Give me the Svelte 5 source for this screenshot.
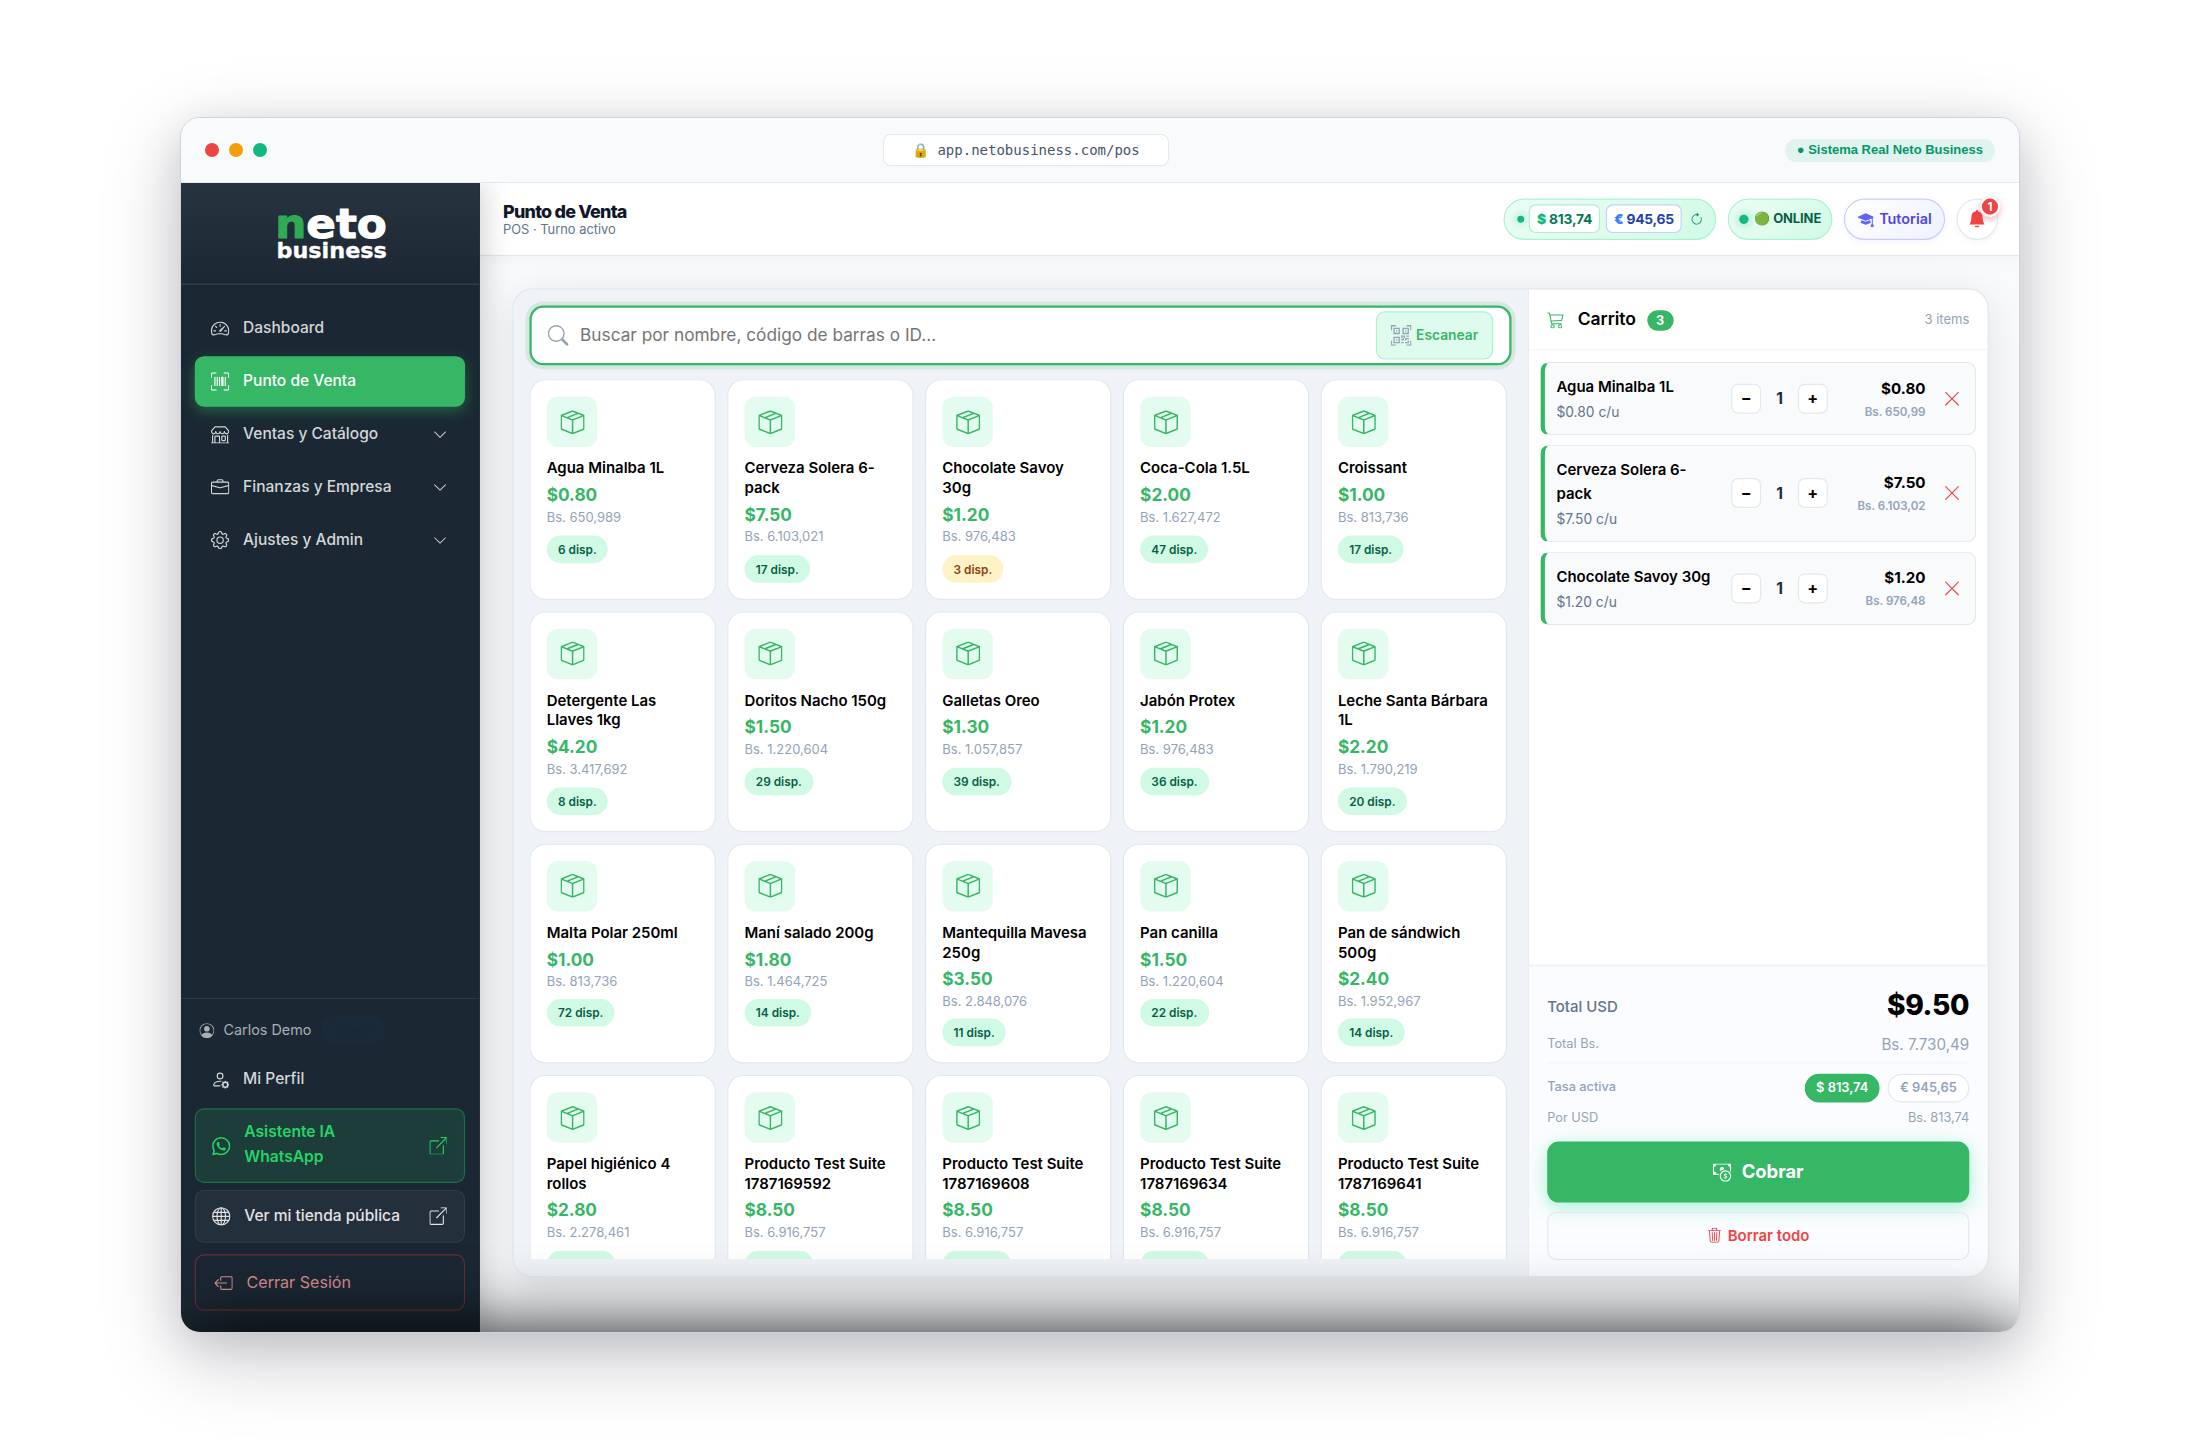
<script>
  const I = {
    speed: "M8 4a.5.5 0 0 1 .5.5V6a.5.5 0 0 1-1 0V4.5A.5.5 0 0 1 8 4M3.732 5.732a.5.5 0 0 1 .707 0l.915.914a.5.5 0 1 1-.708.708l-.914-.915a.5.5 0 0 1 0-.707M2 10a.5.5 0 0 1 .5-.5h1.586a.5.5 0 0 1 0 1H2.5A.5.5 0 0 1 2 10m9.5 0a.5.5 0 0 1 .5-.5h1.5a.5.5 0 0 1 0 1H12a.5.5 0 0 1-.5-.5m.754-4.246a.39.39 0 0 0-.527-.02L7.547 9.31a.91.91 0 1 0 1.302 1.258l3.434-4.297a.39.39 0 0 0-.029-.518zM0 10a8 8 0 1 1 15.547 2.661c-.442 1.253-1.845 1.602-2.932 1.25C11.309 13.488 9.475 13 8 13c-1.474 0-3.31.488-4.615.911-1.087.352-2.49.003-2.932-1.25A8 8 0 0 1 0 10m8-7a7 7 0 0 0-6.603 9.329c.203.575.923.876 1.68.63C4.397 12.533 6.358 12 8 12s3.604.532 4.923.96c.757.245 1.477-.056 1.68-.631A7 7 0 0 0 8 3",
    upc: "M1.5 1a.5.5 0 0 0-.5.5v3a.5.5 0 0 1-1 0v-3A1.5 1.5 0 0 1 1.5 0h3a.5.5 0 0 1 0 1zM11 .5a.5.5 0 0 1 .5-.5h3A1.5 1.5 0 0 1 16 1.5v3a.5.5 0 0 1-1 0v-3a.5.5 0 0 0-.5-.5h-3a.5.5 0 0 1-.5-.5M.5 11a.5.5 0 0 1 .5.5v3a.5.5 0 0 0 .5.5h3a.5.5 0 0 1 0 1h-3A1.5 1.5 0 0 1 0 14.5v-3a.5.5 0 0 1 .5-.5m15 0a.5.5 0 0 1 .5.5v3a1.5 1.5 0 0 1-1.5 1.5h-3a.5.5 0 0 1 0-1h3a.5.5 0 0 0 .5-.5v-3a.5.5 0 0 1 .5-.5M3 4.5a.5.5 0 0 1 1 0v7a.5.5 0 0 1-1 0zm2 0a.5.5 0 0 1 1 0v7a.5.5 0 0 1-1 0zm2 0a.5.5 0 0 1 1 0v7a.5.5 0 0 1-1 0zm2 0a.5.5 0 0 1 .5-.5h1a.5.5 0 0 1 .5.5v7a.5.5 0 0 1-.5.5h-1a.5.5 0 0 1-.5-.5zm3 0a.5.5 0 0 1 1 0v7a.5.5 0 0 1-1 0z",
    shop: "M2.97 1.35A1 1 0 0 1 3.73 1h8.54a1 1 0 0 1 .76.35l2.609 3.044A1.5 1.5 0 0 1 16 5.37v.255a2.375 2.375 0 0 1-4.25 1.458A2.37 2.37 0 0 1 9.875 8 2.37 2.37 0 0 1 8 7.083 2.37 2.37 0 0 1 6.125 8a2.37 2.37 0 0 1-1.875-.917A2.375 2.375 0 0 1 0 5.625V5.37a1.5 1.5 0 0 1 .361-.976zm1.78 4.275a1.375 1.375 0 0 0 2.75 0 .5.5 0 0 1 1 0 1.375 1.375 0 0 0 2.75 0 .5.5 0 0 1 1 0 1.375 1.375 0 1 0 2.75 0V5.37a.5.5 0 0 0-.12-.325L12.27 2H3.73L1.12 5.045A.5.5 0 0 0 1 5.37v.255a1.375 1.375 0 0 0 2.75 0 .5.5 0 0 1 1 0M1.5 8.5A.5.5 0 0 1 2 9v6h1v-5a1 1 0 0 1 1-1h3a1 1 0 0 1 1 1v5h6V9a.5.5 0 0 1 1 0v6h.5a.5.5 0 0 1 0 1H.5a.5.5 0 0 1 0-1H1V9a.5.5 0 0 1 .5-.5M4 15h3v-5H4zm5-5a1 1 0 0 1 1-1h2a1 1 0 0 1 1 1v3a1 1 0 0 1-1 1h-2a1 1 0 0 1-1-1zm3 0h-2v3h2z",
    brief: "M6.5 1A1.5 1.5 0 0 0 5 2.5V3H1.5A1.5 1.5 0 0 0 0 4.5v8A1.5 1.5 0 0 0 1.5 14h13a1.5 1.5 0 0 0 1.5-1.5v-8A1.5 1.5 0 0 0 14.5 3H11v-.5A1.5 1.5 0 0 0 9.5 1zm0 1h3a.5.5 0 0 1 .5.5V3H6v-.5a.5.5 0 0 1 .5-.5m1.886 6.914L15 7.151V12.5a.5.5 0 0 1-.5.5h-13a.5.5 0 0 1-.5-.5V7.15l6.614 1.764a1.5 1.5 0 0 0 .772 0M1.5 4h13a.5.5 0 0 1 .5.5v1.616L8.129 7.948a.5.5 0 0 1-.258 0L1 6.116V4.5a.5.5 0 0 1 .5-.5",
    gear: "M8 4.754a3.246 3.246 0 1 0 0 6.492 3.246 3.246 0 0 0 0-6.492M5.754 8a2.246 2.246 0 1 1 4.492 0 2.246 2.246 0 0 1-4.492 0M9.796 1.343c-.527-1.79-3.065-1.79-3.592 0l-.094.319a.873.873 0 0 1-1.255.52l-.292-.16c-1.64-.892-3.433.902-2.54 2.541l.159.292a.873.873 0 0 1-.52 1.255l-.319.094c-1.79.527-1.79 3.065 0 3.592l.319.094a.873.873 0 0 1 .52 1.255l-.16.292c-.892 1.64.901 3.434 2.541 2.54l.292-.159a.873.873 0 0 1 1.255.52l.094.319c.527 1.79 3.065 1.79 3.592 0l.094-.319a.873.873 0 0 1 1.255-.52l.292.16c1.64.893 3.434-.902 2.54-2.541l-.159-.292a.873.873 0 0 1 .52-1.255l.319-.094c1.79-.527 1.79-3.065 0-3.592l-.319-.094a.873.873 0 0 1-.52-1.255l.16-.292c.893-1.64-.902-3.433-2.541-2.54l-.292.159a.873.873 0 0 1-1.255-.52zm-2.633.283c.246-.835 1.428-.835 1.674 0l.094.319a1.873 1.873 0 0 0 2.693 1.115l.291-.16c.764-.415 1.6.42 1.184 1.185l-.159.292a1.873 1.873 0 0 0 1.116 2.692l.318.094c.835.246.835 1.428 0 1.674l-.319.094a1.873 1.873 0 0 0-1.115 2.693l.16.291c.415.764-.42 1.6-1.185 1.184l-.291-.159a1.873 1.873 0 0 0-2.693 1.116l-.094.318c-.246.835-1.428.835-1.674 0l-.094-.319a1.873 1.873 0 0 0-2.692-1.115l-.292.16c-.764.415-1.6-.42-1.184-1.185l.159-.291A1.873 1.873 0 0 0 1.945 8.93l-.319-.094c-.835-.246-.835-1.428 0-1.674l.319-.094A1.873 1.873 0 0 0 3.06 4.377l-.16-.292c-.415-.764.42-1.6 1.185-1.184l.292.159a1.873 1.873 0 0 0 2.692-1.115z",
    chevron: "M1.646 4.646a.5.5 0 0 1 .708 0L8 10.293l5.646-5.647a.5.5 0 0 1 .708.708l-6 6a.5.5 0 0 1-.708 0l-6-6a.5.5 0 0 1 0-.708",
    personCircle: "M11 6a3 3 0 1 1-6 0 3 3 0 0 1 6 0M0 8a8 8 0 1 1 16 0A8 8 0 0 1 0 8m8-7a7 7 0 0 0-5.468 11.37C3.242 11.226 4.805 10 8 10s4.757 1.225 5.468 2.37A7 7 0 0 0 8 1",
    personGear: "M11 5a3 3 0 1 1-6 0 3 3 0 0 1 6 0M8 7a2 2 0 1 0 0-4 2 2 0 0 0 0 4m.256 7a4.5 4.5 0 0 1-.229-1.004H3c.001-.246.154-.986.832-1.664C4.484 10.68 5.711 10 8 10q.39 0 .74.025c.226-.341.496-.65.804-.918Q8.844 9.002 8 9c-5 0-6 3-6 4s1 1 1 1zm3.63-4.54c.18-.613 1.048-.613 1.229 0l.043.148a.64.64 0 0 0 .921.382l.136-.074c.561-.306 1.175.308.87.869l-.075.136a.64.64 0 0 0 .382.92l.149.045c.612.18.612 1.048 0 1.229l-.15.043a.64.64 0 0 0-.38.921l.074.136c.305.561-.309 1.175-.87.87l-.136-.075a.64.64 0 0 0-.92.382l-.045.149c-.18.612-1.048.612-1.229 0l-.043-.15a.64.64 0 0 0-.921-.38l-.136.074c-.561.305-1.175-.309-.87-.87l.075-.136a.64.64 0 0 0-.382-.92l-.148-.045c-.613-.18-.613-1.048 0-1.229l.148-.043a.64.64 0 0 0 .382-.921l-.074-.136c-.306-.561.308-1.175.869-.87l.136.075a.64.64 0 0 0 .92-.382zM14 12.5a1.5 1.5 0 1 0-3 0 1.5 1.5 0 0 0 3 0",
    whatsapp: "M13.601 2.326A7.85 7.85 0 0 0 7.994 0C3.627 0 .068 3.558.064 7.926c0 1.399.366 2.76 1.057 3.965L0 16l4.204-1.102a7.9 7.9 0 0 0 3.79.965h.004c4.368 0 7.926-3.558 7.93-7.93A7.9 7.9 0 0 0 13.6 2.326zM7.994 14.521a6.6 6.6 0 0 1-3.356-.92l-.24-.144-2.494.654.666-2.433-.156-.251a6.56 6.56 0 0 1-1.007-3.505c0-3.626 2.957-6.584 6.591-6.584a6.56 6.56 0 0 1 4.66 1.931 6.56 6.56 0 0 1 1.928 4.66c-.004 3.639-2.961 6.592-6.592 6.592m3.615-4.934c-.197-.099-1.17-.578-1.353-.646-.182-.065-.315-.099-.445.099-.133.197-.513.646-.627.775-.114.133-.232.148-.43.05-.197-.1-.836-.308-1.592-.985-.59-.525-.985-1.175-1.103-1.372-.114-.198-.011-.304.088-.403.087-.088.197-.232.296-.346.1-.114.133-.198.198-.33.065-.134.034-.248-.015-.347-.05-.099-.445-1.076-.612-1.47-.16-.389-.323-.335-.445-.34-.114-.007-.247-.007-.38-.007a.73.73 0 0 0-.529.247c-.182.198-.691.677-.691 1.654s.71 1.916.81 2.049c.098.133 1.394 2.132 3.383 2.992.47.205.84.326 1.129.418.475.152.904.129 1.246.08.38-.058 1.171-.48 1.338-.943.164-.464.164-.86.114-.943-.049-.084-.182-.133-.38-.232",
    external: "M8.636 3.5a.5.5 0 0 0-.5-.5H1.5A1.5 1.5 0 0 0 0 4.5v10A1.5 1.5 0 0 0 1.5 16h10a1.5 1.5 0 0 0 1.5-1.5V7.864a.5.5 0 0 0-1 0V14.5a.5.5 0 0 1-.5.5h-10a.5.5 0 0 1-.5-.5v-10a.5.5 0 0 1 .5-.5h6.636a.5.5 0 0 0 .5-.5M16 .5a.5.5 0 0 0-.5-.5h-5a.5.5 0 0 0 0 1h3.793L6.146 9.146a.5.5 0 1 0 .708.708L15 1.707V5.5a.5.5 0 0 0 1 0z",
    logout: "M6 12.5a.5.5 0 0 0 .5.5h8a.5.5 0 0 0 .5-.5v-9a.5.5 0 0 0-.5-.5h-8a.5.5 0 0 0-.5.5v2a.5.5 0 0 1-1 0v-2A1.5 1.5 0 0 1 6.5 2h8A1.5 1.5 0 0 1 16 3.5v9a1.5 1.5 0 0 1-1.5 1.5h-8A1.5 1.5 0 0 1 5 12.5v-2a.5.5 0 0 1 1 0zM.146 8.354a.5.5 0 0 1 0-.708l3-3a.5.5 0 1 1 .708.708L1.707 7.5H10.5a.5.5 0 0 1 0 1H1.707l2.147 2.146a.5.5 0 0 1-.708.708z",
    search: "M11.742 10.344a6.5 6.5 0 1 0-1.397 1.398h-.001q.044.06.098.115l3.85 3.85a1 1 0 0 0 1.415-1.414l-3.85-3.85a1 1 0 0 0-.115-.1zM12 6.5a5.5 5.5 0 1 1-11 0 5.5 5.5 0 0 1 11 0",
    qr: "M0 .5A.5.5 0 0 1 .5 0h3a.5.5 0 0 1 0 1H1v2.5a.5.5 0 0 1-1 0zm12 0a.5.5 0 0 1 .5-.5h3a.5.5 0 0 1 .5.5v3a.5.5 0 0 1-1 0V1h-2.5a.5.5 0 0 1-.5-.5M.5 12a.5.5 0 0 1 .5.5V15h2.5a.5.5 0 0 1 0 1h-3a.5.5 0 0 1-.5-.5v-3a.5.5 0 0 1 .5-.5m15 0a.5.5 0 0 1 .5.5v3a.5.5 0 0 1-.5.5h-3a.5.5 0 0 1 0-1H15v-2.5a.5.5 0 0 1 .5-.5M4 4h1v1H4zM7 2H2v5h5zM3 3h3v3H3zm2 8H4v1h1zM7 9H2v5h5zm-4 1h3v3H3zm8-6h1v1h-1zM9 2h5v5H9zm1 1v3h3V3zM8 8v2h1v1H8v1h2v-2h1v2h1v-1h2v-1h-3V8zm2 2H9V9h1zm4 2h-1v1h-2v1h3zm-4 2v-1H8v1zM12 9h2V8h-2z",
    box: "M8.186 1.113a.5.5 0 0 0-.372 0L1.846 3.5l2.404.961L10.404 2zm3.564 1.426L5.596 5 8 5.961 14.154 3.5zm3.25 1.7-6.5 2.6v7.922l6.5-2.6V4.24zM7.5 14.762V6.838L1 4.239v7.923zM7.443.184a1.5 1.5 0 0 1 1.114 0l7.129 2.852A.5.5 0 0 1 16 3.5v8.662a1 1 0 0 1-.629.928l-7.185 2.874a.5.5 0 0 1-.372 0L.63 13.09a1 1 0 0 1-.63-.928V3.5a.5.5 0 0 1 .314-.464z",
    cart: "M0 1.5A.5.5 0 0 1 .5 1H2a.5.5 0 0 1 .485.379L2.89 3H14.5a.5.5 0 0 1 .49.598l-1 5a.5.5 0 0 1-.465.401l-9.397.472L4.415 11H13a.5.5 0 0 1 0 1H4a.5.5 0 0 1-.491-.408L2.01 3.607 1.61 2H.5a.5.5 0 0 1-.5-.5M3.102 4l.84 4.479 9.144-.459L13.89 4zM5 12a2 2 0 1 0 0 4 2 2 0 0 0 0-4m7 0a2 2 0 1 0 0 4 2 2 0 0 0 0-4m-7 1a1 1 0 1 1 0 2 1 1 0 0 1 0-2m7 0a1 1 0 1 1 0 2 1 1 0 0 1 0-2",
    x: "M2.146 2.854a.5.5 0 1 1 .708-.708L8 7.293l5.146-5.147a.5.5 0 0 1 .708.708L8.707 8l5.147 5.146a.5.5 0 0 1-.708.708L8 8.707l-5.146 5.147a.5.5 0 0 1-.708-.708L7.293 8z",
    refresh: "M8 3a5 5 0 1 0 4.546 2.914.5.5 0 0 1 .908-.417A6 6 0 1 1 8 2zM8 4.466V.534a.25.25 0 0 1 .41-.192l2.36 1.966c.12.1.12.284 0 .384L8.41 4.658A.25.25 0 0 1 8 4.466",
    grad: "M8.211 2.047a.5.5 0 0 0-.422 0l-7.5 3.5a.5.5 0 0 0 .025.917l7.5 3a.5.5 0 0 0 .372 0L14 7.14V13a1 1 0 0 0-1 1v2h3v-2a1 1 0 0 0-1-1V6.739l.686-.275a.5.5 0 0 0 .025-.917zM4.176 9.032a.5.5 0 0 0-.656.327l-.5 1.7a.5.5 0 0 0 .294.605l4.5 1.8a.5.5 0 0 0 .372 0l4.5-1.8a.5.5 0 0 0 .294-.605l-.5-1.7a.5.5 0 0 0-.656-.327L8 10.466z",
    bell: "M8 16a2 2 0 0 0 2-2H6a2 2 0 0 0 2 2m.995-14.901a1 1 0 1 0-1.99 0A5 5 0 0 0 3 6c0 1.098-.5 6-2 7h14c-1.5-1-2-5.902-2-7 0-2.42-1.72-4.44-4.005-4.901",
    cash: "M11 15a4 4 0 1 0 0-8 4 4 0 0 0 0 8m5-4a5 5 0 1 1-10 0 5 5 0 0 1 10 0M9.438 11.944c.047.596.518 1.06 1.363 1.116v.44h.375v-.443c.875-.061 1.386-.529 1.386-1.207 0-.618-.39-.936-1.09-1.1l-.296-.07v-1.2c.376.043.614.248.671.532h.658c-.047-.575-.54-1.024-1.329-1.073V8.5h-.375v.45c-.747.073-1.255.522-1.255 1.158 0 .562.378.92 1.007 1.066l.248.061v1.272c-.384-.058-.639-.27-.696-.563h-.668zm1.36-1.354c-.369-.085-.569-.26-.569-.522 0-.294.216-.514.572-.578v1.1zm.432.746c.449.104.655.272.655.569 0 .339-.257.571-.709.614v-1.195zM1 0a1 1 0 0 0-1 1v8a1 1 0 0 0 1 1h4.083q.088-.517.258-1H3a2 2 0 0 0-2-2V3a2 2 0 0 0 2-2h10a2 2 0 0 0 2 2v3.528c.38.34.717.728 1 1.154V1a1 1 0 0 0-1-1zM9.998 5.083 10 5a2 2 0 1 0-3.132 1.65 6 6 0 0 1 3.13-1.567",
    trash: "M6.5 1h3a.5.5 0 0 1 .5.5v1H6v-1a.5.5 0 0 1 .5-.5M11 2.5v-1A1.5 1.5 0 0 0 9.5 0h-3A1.5 1.5 0 0 0 5 1.5v1H1.5a.5.5 0 0 0 0 1h.538l.853 10.66A2 2 0 0 0 4.885 16h6.23a2 2 0 0 0 1.994-1.84l.853-10.66h.538a.5.5 0 0 0 0-1zm1.958 1-.846 10.58a1 1 0 0 1-.997.92h-6.23a1 1 0 0 1-.997-.92L3.042 3.5zm-7.487 1a.5.5 0 0 1 .528.47l.5 8.5a.5.5 0 0 1-.998.06L5 5.03a.5.5 0 0 1 .47-.53Zm5.058 0a.5.5 0 0 1 .47.53l-.5 8.5a.5.5 0 1 1-.998-.06l.5-8.5a.5.5 0 0 1 .528-.47M8 4.5a.5.5 0 0 1 .5.5v8.5a.5.5 0 0 1-1 0V5a.5.5 0 0 1 .5-.5",
  };

  const nav = [
    { label: "Dashboard", icon: I.speed },
    { label: "Punto de Venta", icon: I.upc, active: true },
    { label: "Ventas y Catálogo", icon: I.shop, more: true },
    { label: "Finanzas y Empresa", icon: I.brief, more: true },
    { label: "Ajustes y Admin", icon: I.gear, more: true },
  ];

  const products = [
    ["Agua Minalba 1L", "0.80", "650,989", 6],
    ["Cerveza Solera 6-pack", "7.50", "6.103,021", 17],
    ["Chocolate Savoy 30g", "1.20", "976,483", 3],
    ["Coca-Cola 1.5L", "2.00", "1.627,472", 47],
    ["Croissant", "1.00", "813,736", 17],
    ["Detergente Las Llaves 1kg", "4.20", "3.417,692", 8],
    ["Doritos Nacho 150g", "1.50", "1.220,604", 29],
    ["Galletas Oreo", "1.30", "1.057,857", 39],
    ["Jabón Protex", "1.20", "976,483", 36],
    ["Leche Santa Bárbara 1L", "2.20", "1.790,219", 20],
    ["Malta Polar 250ml", "1.00", "813,736", 72],
    ["Maní salado 200g", "1.80", "1.464,725", 14],
    ["Mantequilla Mavesa 250g", "3.50", "2.848,076", 11],
    ["Pan canilla", "1.50", "1.220,604", 22],
    ["Pan de sándwich 500g", "2.40", "1.952,967", 14],
    ["Papel higiénico 4 rollos", "2.80", "2.278,461", 25],
    ["Producto Test Suite 1787169592", "8.50", "6.916,757", 20],
    ["Producto Test Suite 1787169608", "8.50", "6.916,757", 20],
    ["Producto Test Suite 1787169634", "8.50", "6.916,757", 20],
    ["Producto Test Suite 1787169641", "8.50", "6.916,757", 20],
  ];

  const cart = [
    ["Agua Minalba 1L", "0.80", "650,99"],
    ["Cerveza Solera 6-pack", "7.50", "6.103,02"],
    ["Chocolate Savoy 30g", "1.20", "976,48"],
  ];
</script>

{#snippet icon(d, size)}
  <svg class="ic" width={size} height={size} viewBox="0 0 16 16" fill="currentColor" aria-hidden="true"><path {d} /></svg>
{/snippet}

<div class="page">
  <div class="window">
    <div class="titlebar">
      <div class="lights"><i class="red"></i><i class="amber"></i><i class="green"></i></div>
      <div class="url">🔒 app.netobusiness.com/pos</div>
      <div class="real">● Sistema Real Neto Business</div>
    </div>
    <div class="viewport">
      <div class="app">
        <aside>
          <div class="brand">
            <svg class="mark" width="94" height="48" viewBox="0 0 94 48" role="img" aria-label="neto business">
              <g class="logo">
                <text class="big" x="-2" y="28" font-size="35" textLength="97" lengthAdjust="spacingAndGlyphs"><tspan class="n">n</tspan>eto</text>
                <text class="small" x="-1" y="46" font-size="19" textLength="96" lengthAdjust="spacingAndGlyphs">business</text>
              </g>
            </svg>
          </div>
          <nav>
            {#each nav as n}
              <div class="item" class:active={n.active}>
                {@render icon(n.icon, 16)}
                <span>{n.label}</span>
                {#if n.more}<b class="chev">{@render icon(I.chevron, 12.5)}</b>{/if}
              </div>
            {/each}
          </nav>
          <div class="foot">
            <div class="user">{@render icon(I.personCircle, 13)}<span>Carlos Demo</span><em class="role">Admin</em></div>
            <div class="item profile">{@render icon(I.personGear, 16)}<span>Mi Perfil</span></div>
            <div class="wa">{@render icon(I.whatsapp, 16)}<span>Asistente IA<br />WhatsApp</span>{@render icon(I.external, 15.5)}</div>
            <div class="store">
              <svg class="ic" width="16" height="16" viewBox="0 0 16 16" fill="none" stroke="currentColor" stroke-width="1" aria-hidden="true">
                <circle cx="8" cy="8" r="7.5" /><ellipse cx="8" cy="8" rx="3.7" ry="7.5" />
                <path d="M8 .5v15M.5 8h15M1.8 4.5h12.4M1.8 11.5h12.4" />
              </svg>
              <span>Ver mi tienda pública</span>{@render icon(I.external, 15.5)}
            </div>
            <div class="logout">{@render icon(I.logout, 16)}<span>Cerrar Sesión</span></div>
          </div>
        </aside>

        <main>
          <header>
            <div class="heading"><h1>Punto de Venta</h1><p>POS · Turno activo</p></div>
            <div class="rates">
              <i class="dot"></i>
              <span class="rate usd"><b>$</b> 813,74</span>
              <span class="rate eur"><b>€</b> 945,65</span>
              {@render icon(I.refresh, 12)}
            </div>
            <div class="online"><i class="dot"></i><span>🟢 ONLINE</span></div>
            <div class="tutorial">{@render icon(I.grad, 14)}<span>Tutorial</span></div>
            <div class="bell">{@render icon(I.bell, 15.5)}<span class="count">1</span></div>
          </header>

          <section class="pos">
            <div class="catalog">
              <div class="search">
                {@render icon(I.search, 18)}
                <span class="ph">Buscar por nombre, código de barras o ID...</span>
                <div class="scan">{@render icon(I.qr, 18)}<span>Escanear</span></div>
              </div>
              <div class="gridwrap">
                <div class="grid">
                  {#each products as [name, usd, bs, stock]}
                    <article>
                      <div class="thumb">{@render icon(I.box, 21)}</div>
                      <div class="name">{name}</div>
                      <div class="usdp">${usd}</div>
                      <div class="bs">Bs. {bs}</div>
                      <span class="stock" class:low={stock < 5}>{stock} disp.</span>
                    </article>
                  {/each}
                </div>
              </div>
            </div>

            <div class="cart">
              <div class="carthead">
                {@render icon(I.cart, 15)}<h2>Carrito</h2><span class="badge">3</span><span class="items">3 items</span>
              </div>
              <div class="lines">
                {#each cart as [name, usd, bs]}
                  <div class="line">
                    <div class="info"><div class="lname">{name}</div><div class="unit">${usd} c/u</div></div>
                    <div class="qty"><button>−</button><span>1</span><button>+</button></div>
                    <div class="sum"><div class="lusd">${usd}</div><div class="lbs">Bs. {bs}</div></div>
                    <div class="del">{@render icon(I.x, 16)}</div>
                  </div>
                {/each}
              </div>
              <div class="totals">
                <div class="row total"><span>Total USD</span><strong>$9.50</strong></div>
                <div class="row totalbs"><span>Total Bs.</span><span class="v">Bs. 7.730,49</span></div>
                <div class="row tasa"><span>Tasa activa</span><div class="pills"><b class="on">$ 813,74</b><b>€ 945,65</b></div></div>
                <div class="row por"><span>Por USD</span><span>Bs. 813,74</span></div>
                <div class="pay">{@render icon(I.cash, 16)}<span>Cobrar</span></div>
                <div class="clear">{@render icon(I.trash, 13)}<span>Borrar todo</span></div>
              </div>
            </div>
          </section>
        </main>
        <div class="shade"></div>
      </div>
    </div>
  </div>
</div>

<style>
  :global(body) { margin: 0; background: #fff; }
  * { box-sizing: border-box; }
  .page { width: 2200px; height: 1450px; display: flex; align-items: center; justify-content: center; overflow: hidden; background: #fff; }
  .window {
    width: 1840px; height: 1216px; border: 1px solid #cbd5e1; border-radius: 20px; overflow: hidden; background: #fff;
    display: flex; flex-direction: column; box-shadow: 0 24px 80px rgba(15, 15, 35, 0.22), 0 10px 40px rgba(15, 15, 35, 0.1);
  }
  .titlebar {
    height: 65px; flex: none; display: flex; align-items: center; justify-content: space-between; padding: 0 24px;
    background: #f8fafc; border-bottom: 1px solid #e2e8f0;
  }
  .lights { display: flex; gap: 10px; }
  .lights i { width: 14px; height: 14px; border-radius: 50%; }
  .red { background: #ef4444; }
  .amber { background: #f59e0b; }
  .green { background: #10b981; }
  .url {
    width: 286px; height: 32px; border: 1px solid #e2e8f0; border-radius: 8px; background: #fff; text-align: center;
    font: 14px/30px "DejaVu Sans Mono", monospace; color: #475569; box-shadow: 0 1px 2px rgba(0, 0, 0, 0.03); white-space: nowrap;
  }
  .real {
    height: 23px; line-height: 22px; padding: 0 12px; border-radius: 12px; background: rgba(16, 185, 129, 0.1); color: #059669;
    font-family: "Liberation Sans", Arial, sans-serif; font-size: 13px; font-weight: 700; white-space: nowrap;
  }
  .viewport { flex: 1; min-height: 0; overflow: hidden; background: #fff; }
  .app {
    width: 1600px; height: 1000px; transform: translateY(-0.5px) scale(1.15); transform-origin: 0 0; display: flex; position: relative;
    font-family: Inter, sans-serif; line-height: 1.6; background: #f8fafc; overflow: hidden;
  }
  .ic { display: block; flex: none; }

  aside {
    width: 260px; flex: none; display: flex; flex-direction: column; background: #1b2833; border-right: 1px solid #24313b;
    box-shadow: 4px 0 24px rgba(0, 0, 0, 0.18); position: relative; z-index: 2; color: #d3d6d9;
  }
  .brand {
    height: 89px; border-bottom: 1px solid #35414b; background: linear-gradient(#27333f, #1b2833);
    display: flex; align-items: center; justify-content: center; padding-left: 2px;
  }
  .mark { overflow: visible; }
  .logo { font-family: "DejaVu Sans", sans-serif; font-weight: 700; fill: #fff; stroke: #fff; stroke-linejoin: round; }
  .big { stroke-width: 0.9; }
  .small { stroke-width: 0.3; }
  .n { fill: #2fab55; stroke: #2fab55; }
  nav { padding: 16px 12px 0; display: flex; flex-direction: column; gap: 2px; flex: 1; }
  .item {
    height: 44px; display: flex; align-items: center; gap: 12px; padding: 0 16px 0 14px; border-radius: 8px;
    font-size: 13.5px; font-weight: 500; white-space: nowrap;
  }
  .item span { margin-top: -0.6px; }
  .active { background: #36b766; color: #fff; box-shadow: 0 4px 12px rgba(54, 183, 102, 0.4); }
  .chev { margin-left: auto; }
  .foot { border-top: 1px solid #2b3842; height: 291px; padding: 15px 12px 0; }
  .user { display: flex; align-items: center; height: 24px; padding-left: 4px; font-size: 12.5px; color: #a9afb4; }
  .user span { margin-left: 8px; }
  .role {
    width: 56px; height: 24px; line-height: 24px; border-radius: 12px; background: #1a2a38; margin-left: 9px;
    font-size: 11px; font-style: normal; font-weight: 600; text-align: center; color: #1b2934;
  }
  .profile { margin-top: 9px; }
  .wa {
    margin-top: 3px; height: 65px; border: 1px solid #206e44; border-radius: 8px; background: #1c3d3a; color: #25d366;
    display: flex; align-items: center; padding: 0 15px 0 14px; font-size: 13.6px; font-weight: 600; line-height: 21.8px;
  }
  .wa span, .store span { flex: 1; margin-left: 12px; }
  .wa span { margin-top: -2px; }
  .store {
    margin-top: 6px; height: 46px; border: 1px solid #313d48; border-radius: 8px; background: #232f3b; color: #e1e3e5;
    display: flex; align-items: center; padding: 0 15px 0 14px; font-size: 13.5px; font-weight: 500; white-space: nowrap;
  }
  .logout {
    margin-top: 10px; height: 49px; border: 1px solid #6c2e38; border-radius: 8px; color: #dc8f91;
    display: flex; align-items: center; gap: 12px; padding: 0 16px; font-size: 14px;
  }
  .logout span { margin-top: -1px; }

  main { flex: 1; min-width: 0; display: flex; flex-direction: column; background: #f8fafc; }
  header {
    height: 64px; flex: none; display: flex; align-items: center; gap: 10px; padding: 0 20px; background: #fff;
    border-bottom: 1px solid #e2e8f0; box-shadow: 0 2px 12px rgba(0, 0, 0, 0.04);
  }
  .heading { margin: 1px auto 0 0; }
  h1 { margin: 0; font-size: 15.6px; line-height: 18px; font-weight: 800; letter-spacing: -0.68px; color: #0f172a; }
  .heading p { margin: -1px 0 0; font-size: 11.2px; line-height: 14px; color: #64748b; }
  .rates, .online {
    height: 36px; display: flex; align-items: center; border: 1px solid #a7f3d0; border-radius: 18px;
    background: linear-gradient(135deg, #ecfdf5, #d1fae5);
  }
  .rates { width: 185px; padding: 0 0 0 10.5px; color: #059669; }
  .rates .dot { width: 6px; height: 6px; margin-right: 4.6px; }
  .dot { flex: none; width: 8px; height: 8px; border-radius: 50%; background: #10b981; box-shadow: 0 0 8px rgba(16, 185, 129, 0.6); }
  .rate {
    flex: none; height: 25px; line-height: 23px; border: 1px solid #b5ecd2; border-radius: 6px; background: #fff;
    font-size: 12px; font-weight: 700; color: #047857; width: 62px; text-align: center; margin-right: 5px; white-space: nowrap; letter-spacing: -0.2px;
  }
  .rate b { color: #10b981; }
  .eur { width: 66px; color: #1e40af; border-color: #bfd3fb; margin-right: 7.4px; }
  .eur b { color: #3b82f6; }
  .online { width: 91px; padding-left: 9px; gap: 5px; font-size: 11.3px; font-weight: 700; color: #065f46; white-space: nowrap; letter-spacing: -0.1px; }
  .tutorial {
    width: 88px; height: 36px; border: 1px solid #c7cbfb; border-radius: 18px; background: linear-gradient(135deg, #fff, #eef2ff);
    display: flex; align-items: center; justify-content: center; gap: 5px; color: #6366f1; font-size: 12.5px; font-weight: 600;
    box-shadow: 0 2px 6px rgba(99, 102, 241, 0.08);
  }
  .tutorial span { color: #4f46e5; }
  .bell {
    width: 36px; height: 36px; border: 1px solid #e2e8f0; border-radius: 50%; background: #fff; color: #ef4444;
    display: flex; align-items: center; justify-content: center; position: relative; box-shadow: 0 2px 6px rgba(0, 0, 0, 0.04);
  }
  .count {
    position: absolute; top: -3px; right: -3px; width: 18px; height: 18px; border: 2px solid #fff; border-radius: 50%;
    background: #ef4444; color: #fff; font-size: 10px; line-height: 14px; font-weight: 700; text-align: center;
    box-shadow: 0 2px 6px rgba(239, 68, 68, 0.4);
  }

  .pos {
    margin: 28px 28px 0; height: 860px; border: 1px solid #e2e8f0; border-radius: 18px; overflow: hidden; background: #eff3f8;
    display: flex; box-shadow: 0 8px 36px rgba(0, 0, 0, 0.1);
  }
  .catalog { flex: 1; min-width: 0; padding: 14px 14px 14.6px; display: flex; flex-direction: column; gap: 12px; }
  .search {
    height: 52px; flex: none; border: 2px solid #36b766; border-radius: 12px; background: #fff; box-shadow: 0 0 0 3.5px rgba(54, 183, 102, 0.16);
    display: flex; align-items: center; padding: 0 14px; color: #94a3b8;
  }
  .ph { margin-left: 10px; flex: 1; font-size: 15px; color: #757575; }
  .scan {
    width: 102px; height: 42px; border: 1px solid #a7f3d0; border-radius: 8px; background: #dffbed;
    display: flex; align-items: center; justify-content: center; gap: 4px; font-size: 12px; font-weight: 600;
  }
  .scan span { color: #36b766; }
  .gridwrap { flex: 1; min-height: 0; overflow: hidden; padding-right: 4px; }
  .grid { display: grid; grid-template-columns: repeat(5, 162px); grid-auto-rows: 191.8px; gap: 10px; }
  article { background: #fff; border: 1px solid #e2e8f0; border-radius: 14px; padding: 14px; }
  .thumb { width: 44px; height: 44px; border-radius: 10px; background: #e4fcef; color: #36b766; display: flex; align-items: center; justify-content: center; }
  .name { margin: 10px 0 4.2px; font-size: 13px; line-height: 16.9px; font-weight: 600; color: #000; }
  .usdp { font-size: 15px; line-height: 22px; font-weight: 700; color: #36b766; }
  .bs { font-size: 11.3px; line-height: 17.6px; color: #94a3b8; }
  .stock {
    display: inline-block; margin-top: 6.2px; height: 24px; line-height: 25.6px; padding: 0 9.8px; border-radius: 12px;
    font-size: 10.3px; font-weight: 600; background: #d1fae5; color: #065f46; vertical-align: top;
  }
  .low { background: #fef3c7; color: #92400e; }

  .cart { width: 400px; flex: none; display: flex; flex-direction: column; background: #fff; border-left: 1px solid #e2e8f0; }
  .carthead { height: 53px; flex: none; display: flex; align-items: center; padding: 0 16px; border-bottom: 1px solid #f1f5f9; color: #36b766; }
  h2 { margin: 0 0 0 11.5px; font-size: 15.2px; font-weight: 600; color: #000; }
  .badge { margin: 2px 0 0 9.5px; width: 23px; height: 18px; line-height: 18px; border-radius: 9px; background: #36b766; color: #fff; font-size: 11px; font-weight: 700; text-align: center; }
  .items { margin-left: auto; font-size: 11.3px; color: #94a3b8; }
  .lines { flex: 1; padding: 10px; display: flex; flex-direction: column; gap: 8px; }
  .line {
    display: flex; align-items: center; border: 1px solid #e2e8f0; border-left: 4px solid #36b766; border-radius: 8px;
    background: #f8fafc; padding: 10px;
  }
  .info { width: 142px; }
  .lname { font-size: 13px; font-weight: 600; line-height: 20.8px; color: #000; }
  .unit { margin-top: 2px; font-size: 12px; line-height: 19.2px; color: #64748b; }
  .qty { display: flex; align-items: center; margin-left: 10px; }
  .qty span { width: 32px; padding-top: 1px; text-align: center; font-size: 13.5px; font-weight: 700; color: #1e293b; }
  .qty button {
    width: 26px; height: 26px; padding: 0; border: 1px solid #e2e8f0; border-radius: 6px; background: #fff;
    font: 700 14px/24px Inter, sans-serif; color: #000;
  }
  .sum { flex: 1; text-align: right; }
  .lusd { font-size: 13.2px; font-weight: 700; line-height: 21px; margin-top: 1px; color: #000; }
  .lbs { font-size: 10.1px; font-weight: 600; line-height: 19px; color: #94a3b8; }
  .del { margin: 0 2px 0 15px; color: #ef4444; }

  .totals { height: 271px; flex: none; border-top: 2px solid #f1f5f9; background: #fafcff; padding: 16px 16px 0; }
  .row { display: flex; align-items: center; justify-content: space-between; color: #94a3b8; font-size: 11.1px; }
  .total { height: 36px; font-size: 13px; font-weight: 500; color: #64748b; }
  .total strong { font-size: 24.5px; font-weight: 800; color: #000; letter-spacing: -0.3px; }
  .totalbs { height: 32px; border-bottom: 1px solid #f1f5f9; }
  .totalbs .v { font-size: 13.2px; margin-top: 1px; }
  .tasa { height: 42px; font-weight: 500; }
  .pills { display: flex; gap: 7px; }
  .pills b { width: 71px; height: 25px; line-height: 23px; border: 1px solid #e2e8f0; border-radius: 13px; background: #fff; text-align: center; font-weight: 600; font-size: 11.2px; }
  .pills .on { width: 65px; background: #36b766; border-color: #36b766; color: #fff; }
  .por { height: 11px; }
  .pay {
    margin-top: 15px; height: 53px; border-radius: 10px; background: #36b766; color: #fff; display: flex; align-items: center; justify-content: center;
    gap: 9px; font-size: 16px; font-weight: 700; box-shadow: 0 4px 16px rgba(16, 220, 120, 0.35);
  }
  .clear {
    margin-top: 8px; height: 41.5px; border: 1px solid #e2e8f0; border-radius: 8px; color: #ef4444; display: flex; align-items: center; justify-content: center;
    gap: 5px; font-size: 13px; font-weight: 600;
  }
  /* soft dark fade rising from beneath the lower edge */
  .shade { position: absolute; z-index: 5; left: 6px; right: 0; top: 1001.5px; height: 120px; box-shadow: 0 0 66px #000; }
</style>
